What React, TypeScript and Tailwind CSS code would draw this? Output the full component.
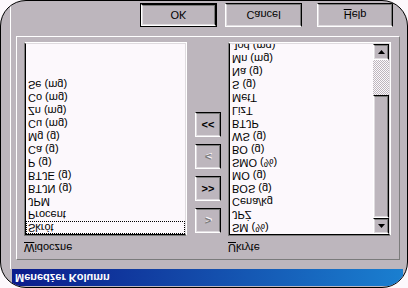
import React from "react";

function Raised({ children, className = "" }: { children?: React.ReactNode; className?: string }) {
  return (
    <div className={"border border-t-white border-l-white border-r-black border-b-black " + className}>
      <div className="flex h-full w-full items-center justify-center border border-t-[#dfdbdf] border-l-[#dfdbdf] border-r-[#7b7b7b] border-b-[#7b7b7b]">
        {children}
      </div>
    </div>
  );
}

function Sunken({ children, className = "" }: { children?: React.ReactNode; className?: string }) {
  return (
    <div className={"border border-t-[#7b7b7b] border-l-[#7b7b7b] border-r-white border-b-white " + className}>
      <div className="h-full w-full overflow-hidden border border-t-black border-l-black border-r-[#dfdbdf] border-b-[#dfdbdf] bg-[#fcf8fc]">
        {children}
      </div>
    </div>
  );
}

const visible = [
  "Skrót",
  "Procent",
  "JPM",
  "BTJN (g)",
  "BTJE (g)",
  "P (g)",
  "Ca (g)",
  "Mg (g)",
  "Cu (mg)",
  "Zn (mg)",
  "Co (mg)",
  "Se (mg)",
];

const hidden = [
  "SM (%)",
  "JPŻ",
  "Cena/kg",
  "BOS (g)",
  "MO (g)",
  "SMO (%)",
  "BO (g)",
  "WS (g)",
  "BTJP",
  "LizT",
  "MetT",
  "S (g)",
  "Na (g)",
  "Mn (mg)",
  "Jod (mg)",
];

function Tri({ up }: { up: boolean }) {
  return (
    <svg width="7" height="4" viewBox="0 0 7 4">
      {up ? <polygon points="3.5,0 7,4 0,4" fill="#000" /> : <polygon points="0,0 7,0 3.5,4" fill="#000" />}
    </svg>
  );
}

function MidBtn({ label, enabled }: { label: string; enabled: boolean }) {
  return (
    <Raised className="h-[25px] w-[26px]">
      <span
        className={
          enabled
            ? "text-[11px] font-bold leading-none text-black"
            : "text-[11px] font-bold leading-none text-[#7b7b7b] [text-shadow:1px_1px_0_#fcf8fc]"
        }
      >
        {label}
      </span>
    </Raised>
  );
}

export default function App() {
  return (
    <div className="h-[288px] w-[408px] overflow-hidden bg-[#fcf8fc] font-['Liberation_Sans',Arial,sans-serif] text-[11px] text-black [transform:scaleY(-1)]">
      <div className="flex h-[288px] w-[408px] flex-col overflow-hidden rounded-[26px] border border-black bg-[#bdb6bd]">
        {/* title bar */}
        <div className="mt-[1px] ml-[11px] mr-[4px] flex h-[17px] items-center bg-[linear-gradient(to_right,#0b1b8b,#1348a8_45%,#1a7fd0)] pl-[3px] text-[11px] font-bold text-white">
          Menedżer Kolumn
        </div>
        {/* client */}
        <div className="ml-[9px] mr-[4px] flex flex-1 flex-col border-l border-white pl-[5px] pr-[3px] pt-[9px]">
          {/* group box */}
          <div className="h-[224px] border border-t-[#7b7b7b] border-r-[#7b7b7b] border-l-white border-b-white pl-[7px] pr-[8px] pt-[5px] pb-[5px]">
            <div className="grid grid-cols-[163px_41px_163px] grid-rows-[13px_194px] gap-y-[5px]">
              <div className="leading-[13px]">
                <span className="underline">W</span>idoczne
              </div>
              <div />
              <div className="leading-[13px]">
                <span className="underline">U</span>kryte
              </div>

              <Sunken className="h-[194px]">
                <div className="flex flex-col">
                  {visible.map((t, i) => (
                    <div
                      key={t}
                      className={
                        i === 0
                          ? "h-[13px] pl-[2px] leading-[13px] outline-1 -outline-offset-1 outline-dotted outline-black"
                          : "h-[13px] pl-[2px] leading-[13px]"
                      }
                    >
                      {t}
                    </div>
                  ))}
                </div>
              </Sunken>

              <div className="flex flex-col gap-[7px] pl-[8px] pt-[3px]">
                <MidBtn label=">" enabled={false} />
                <MidBtn label=">>" enabled={true} />
                <MidBtn label="<" enabled={false} />
                <MidBtn label="<<" enabled={true} />
              </div>

              <Sunken className="h-[194px]">
                <div className="flex h-full">
                  <div className="flex flex-1 flex-col overflow-hidden">
                    {hidden.map((t) => (
                      <div key={t} className="h-[13px] shrink-0 pl-[2px] leading-[13px]">
                        {t}
                      </div>
                    ))}
                  </div>
                  <div className="flex w-[16px] flex-col">
                    <Raised className="h-[16px] bg-[#bdb6bd]">
                      <Tri up={true} />
                    </Raised>
                    <Raised className="h-[123px] bg-[#bdb6bd]" />
                    <div className="flex-1 bg-[repeating-conic-gradient(#bdb6bd_0%_25%,#fcf8fc_0%_50%)] bg-[length:2px_2px]" />
                    <Raised className="h-[16px] bg-[#bdb6bd]">
                      <Tri up={false} />
                    </Raised>
                  </div>
                </div>
              </Sunken>
            </div>
          </div>
          {/* buttons */}
          <div className="mt-[9px] flex h-[24px] pl-[124px]">
            <div className="h-[24px] w-[77px] border border-black">
              <Raised className="h-full w-full">
                <span>OK</span>
              </Raised>
            </div>
            <Raised className="ml-[8px] h-[24px] w-[77px]">
              <span>Cancel</span>
            </Raised>
            <Raised className="ml-[15px] h-[24px] w-[76px]">
              <span>
                <span className="underline">H</span>elp
              </span>
            </Raised>
          </div>
        </div>
      </div>
    </div>
  );
}
